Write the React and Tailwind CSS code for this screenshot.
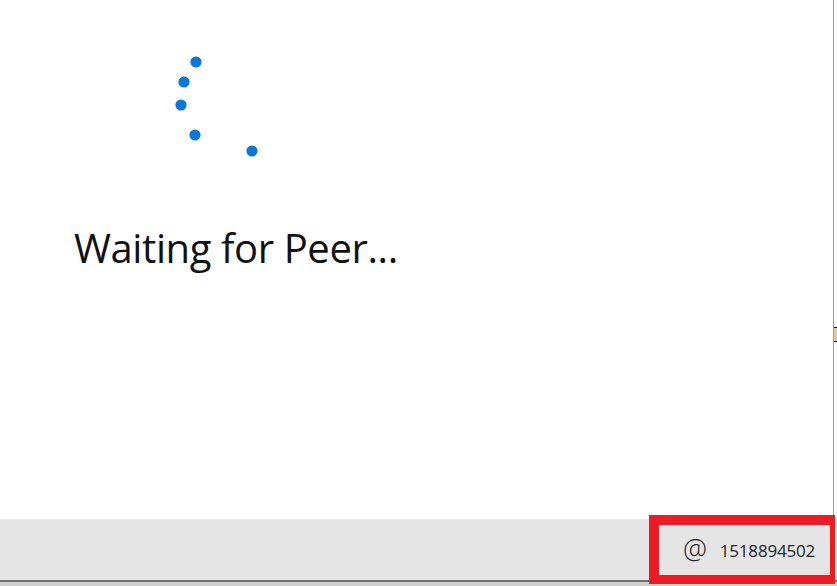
import React from 'react';

const DOTS = [
  [196, 62],
  [184, 82],
  [181, 105],
  [195, 135],
  [252, 151],
];

const Spinner = () => {
  // dots are placed relative to the page, svg starts at (170, 50)
  return (
    <svg width="100" height="112" viewBox="170 50 100 112" className="block ml-[170px] mt-[50px]">
      {DOTS.map(([x, y], i) => (
        <circle key={i} cx={x} cy={y} r="5.6" fill="#0a78d7"/>
      ))}
    </svg>
  );
};

const App = () => {
  return (
    <div className="relative w-[837px] h-[586px] flex flex-col bg-white overflow-hidden"
         style={{fontFamily: '"Open Sans", "Noto Sans", sans-serif'}}>
      <div className="flex flex-1">
        <div className="flex-1 flex flex-col border-r border-[#a0a0a0]">
          <Spinner/>
          <h1 className="ml-[74px] mt-[66px] text-[40px] leading-none text-[#111] font-normal tracking-[-0.4px]">
            Waiting for Peer...
          </h1>
        </div>
        <div className="w-[3px] relative">
          <div className="absolute top-[327px] left-0 w-[3px] h-[15px] bg-[#e8c99a] border-y border-black"></div>
        </div>
      </div>

      <div className="h-[61px] bg-[#e5e5e5] border-t border-[#ededed] flex items-center justify-end pr-[22px] text-[#222]">
        <span className="text-[27px] leading-none font-light mr-[13px] mt-[-4px]">@</span>
        <span className="text-[17px] leading-none tracking-[-0.2px]">1518894502</span>
      </div>
      <div className="h-[2px] bg-[#707070]"></div>
      <div className="h-[4px] bg-[#cfcfcf]"></div>

      {/* highlight annotation */}
      <div className="absolute left-[649px] top-[515px] w-[186px] h-[69px] border-[#ed1c24] border-t-[10px] border-l-[10px] border-r-[5px] border-b-[9px]"></div>
    </div>
  );
};

export default App;
